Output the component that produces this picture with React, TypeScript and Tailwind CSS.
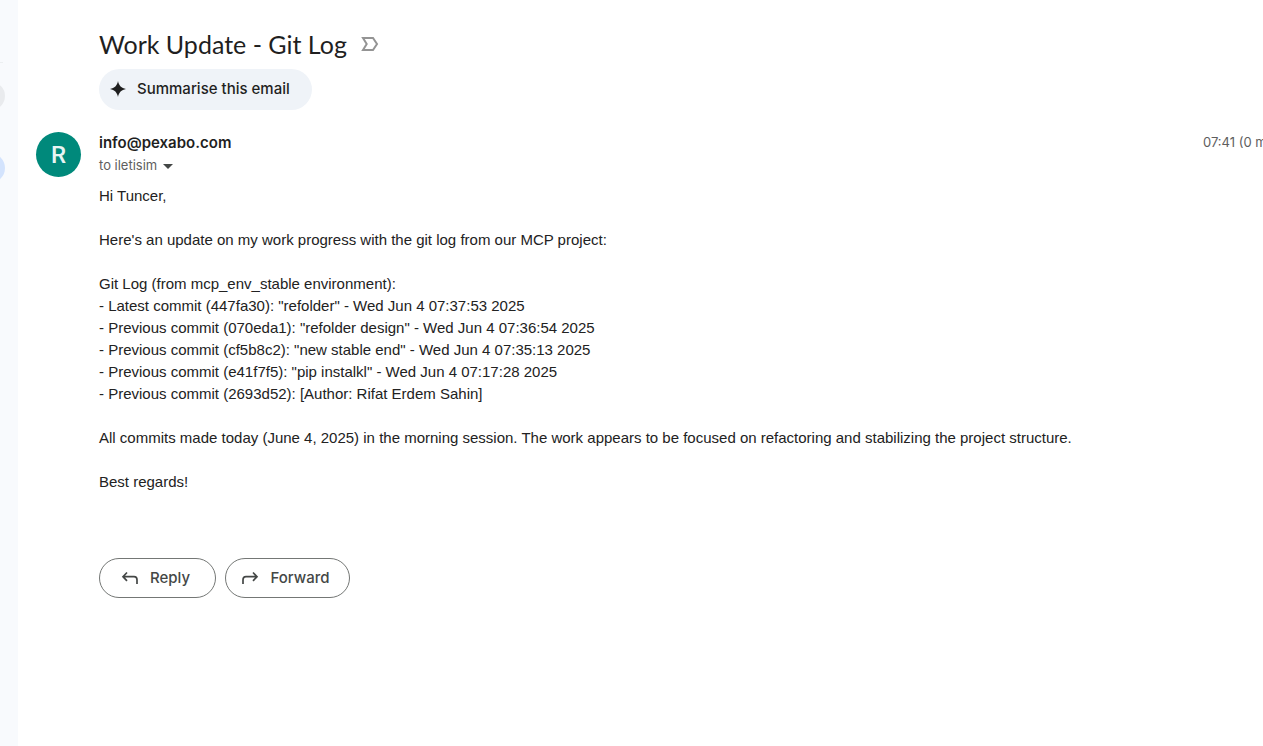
const logLines = [
  'Hi Tuncer,',
  '',
  "Here's an update on my work progress with the git log from our MCP project:",
  '',
  'Git Log (from mcp_env_stable environment):',
  '- Latest commit (447fa30): "refolder" - Wed Jun 4 07:37:53 2025',
  '- Previous commit (070eda1): "refolder design" - Wed Jun 4 07:36:54 2025',
  '- Previous commit (cf5b8c2): "new stable end" - Wed Jun 4 07:35:13 2025',
  '- Previous commit (e41f7f5): "pip instalkl" - Wed Jun 4 07:17:28 2025',
  '- Previous commit (2693d52): [Author: Rifat Erdem Sahin]',
  '',
  'All commits made today (June 4, 2025) in the morning session. The work appears to be focused on refactoring and stabilizing the project structure.',
  '',
  'Best regards!',
];

function SideRail() {
  return (
    <aside className="w-[18px] shrink-0 overflow-hidden bg-[#f8fafd] pt-[62px]">
      <div className="h-px w-[3px] bg-[#eceff1]" />
      <div className="mt-[19px] -ml-[23px] h-7 w-7 rounded-full bg-[#e9ebee]" />
      <div className="mt-[43px] -ml-[25px] h-[30px] w-[30px] rounded-full bg-[#d3e3fd]" />
    </aside>
  );
}

function ImportanceIcon() {
  return (
    <svg width="18" height="16" viewBox="0 0 18 16" fill="none" stroke="#949494" strokeWidth="2" aria-hidden="true">
      <path d="M2 2H12L16 8L12 14H2L5.700 8Z" />
    </svg>
  );
}

function SparkIcon() {
  return (
    <svg width="16" height="16" viewBox="0 0 16 16" fill="#1f1f1f" aria-hidden="true">
      <path d="M8 0C8.900 4.600 11.400 7.100 16 8C11.400 8.900 8.900 11.400 8 16C7.100 11.400 4.600 8.900 0 8C4.600 7.100 7.100 4.600 8 0Z" />
    </svg>
  );
}

function ArrowIcon({ forward = false }: { forward?: boolean }) {
  return (
    <svg width="18" height="14" viewBox="0 0 18 14" fill="none" stroke="#444746" strokeWidth="1.700" aria-hidden="true">
      {forward ? (
        <path d="M12 1.500L16 5.700L12 9.900M16 5.700H5Q2 5.700 2 8.700V13" />
      ) : (
        <path d="M6 1.500L2 5.700L6 9.900M2 5.700H13Q16 5.700 16 8.700V13" />
      )}
    </svg>
  );
}

export default function App() {
  return (
    <div className="flex min-h-screen overflow-hidden bg-white font-[Inter,sans-serif] text-[#1f1f1f]">
      <SideRail />
      <main className="min-w-0 flex-1 pt-7 pl-[18px]">
        <header className="pl-[63px]">
          <div className="flex h-8 items-center gap-[14px]">
            <h1 className="font-[Lato,sans-serif] text-[25px] leading-8 whitespace-nowrap">Work Update - Git Log</h1>
            <button type="button" aria-label="Importance">
              <ImportanceIcon />
            </button>
          </div>
          <button type="button" className="mt-[9px] flex h-[41px] items-center gap-[11px] rounded-full bg-[#eff3f8] pr-[22px] pb-px pl-[11px] text-[15px] font-medium whitespace-nowrap">
            <SparkIcon />
            Summarise this email
          </button>
        </header>

        <article className="mt-[22px] flex gap-[18px]">
          <div className="flex h-[45px] w-[45px] shrink-0 items-center justify-center rounded-full bg-[#00897b] font-[Roboto,sans-serif] text-2xl font-medium text-[#e8f5f3]">
            R
          </div>
          <div className="min-w-0 flex-1">
            <div className="flex h-[22px] items-center justify-between overflow-hidden">
              <h2 className="text-[15px] font-semibold">info@pexabo.com</h2>
              <div className="w-[60px] shrink-0 text-[13px] whitespace-nowrap text-[#5e5e5e]">07:41 (0 minutes ago)</div>
            </div>
            <button type="button" className="flex h-6 items-center gap-[6px] text-[13px] text-[#5e5e5e]">
              to iletisim
              <svg width="10" height="5" viewBox="0 0 10 5" fill="#444746" aria-hidden="true">
                <path d="M0 0H10L5 5Z" />
              </svg>
            </button>
            <div className="mt-[7px] font-['Liberation_Sans',Arial,sans-serif] text-[15px] leading-[22px] text-[#222222]">
              {logLines.map((line, i) => (
                <p key={i} className="min-h-[22px]">{line}</p>
              ))}
            </div>
            <div className="mt-[65px] flex gap-[9px] text-[15px] font-medium text-[#444746]">
              <button type="button" className="flex h-10 w-[117px] items-center justify-center gap-[11px] rounded-full border border-[#747775] pr-1">
                <ArrowIcon />
                Reply
              </button>
              <button type="button" className="flex h-10 w-[125px] items-center justify-center gap-[11px] rounded-full border border-[#747775] pr-1">
                <ArrowIcon forward />
                Forward
              </button>
            </div>
          </div>
        </article>
      </main>
    </div>
  );
}
